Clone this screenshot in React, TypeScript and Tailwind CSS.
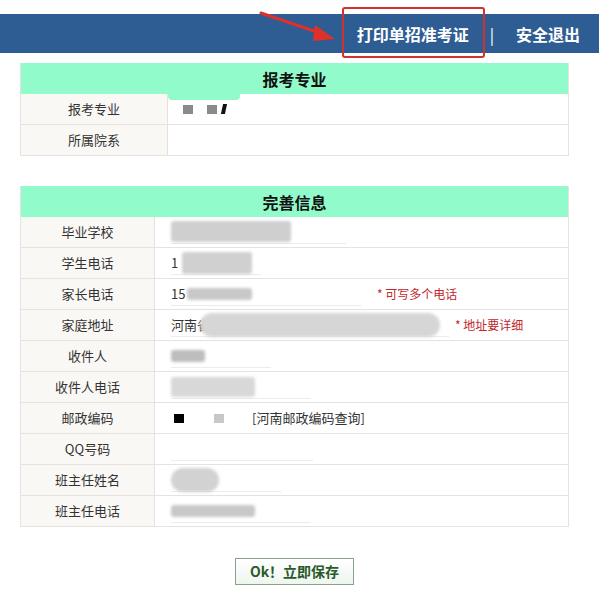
import React from "react";

const font = { fontFamily: '"Noto Sans CJK SC", "Noto Sans", sans-serif' };

function Blur({ w, h, c = "#c9c9c9", round = false }: { w: number; h: number; c?: string; round?: boolean }) {
  return (
    <div
      className={`blur-[1.5px] ${round ? "rounded-full" : "rounded-[3px]"}`}
      style={{ width: w, height: h, background: c }}
    />
  );
}

function Row({ label, children, labelW }: { label: string; children?: React.ReactNode; labelW: number }) {
  return (
    <div className="flex h-[31px] border-b border-[#e6e3de]">
      <div
        className="shrink-0 flex items-center justify-center bg-[#faf8f5] border-r border-[#e6e3de] text-[13px] text-[#333]"
        style={{ width: labelW }}
      >
        {label}
      </div>
      <div className="flex-1 flex items-center pl-[16px] text-[13px] text-[#333] relative">{children}</div>
    </div>
  );
}

function Field({ w = 175, children }: { w?: number; children?: React.ReactNode }) {
  return (
    <div className="h-[24px] flex items-center border-b border-[#ececec]" style={{ width: w }}>
      {children}
    </div>
  );
}

function Note({ text }: { text: string }) {
  return <span className="text-[12px] text-[#c0282d]">* {text}</span>;
}

export default function App() {
  return (
    <div className="w-[599px] h-[595px] bg-white relative overflow-hidden" style={font}>
      <div className="h-[14px]" />
      <div className="h-[39px] bg-[#2e5d93] flex items-center justify-end pr-[19px] text-white font-bold text-[16px]">
        <span>打印单招准考证</span>
        <span className="ml-[21px] mr-[22px] font-normal">|</span>
        <span>安全退出</span>
      </div>

      {/* annotation overlays */}
      <div className="absolute left-[342px] top-[7px] w-[143px] h-[51px] border-2 border-[#d2322d] rounded-[3px]" />
      <svg className="absolute left-[255px] top-[8px]" width="90" height="40" viewBox="0 0 90 40">
        <line x1="6" y1="5" x2="68" y2="26" stroke="#e0302a" strokeWidth="3" strokeLinecap="round" />
        <polygon points="80,31 60,17 58,33" fill="#e0302a" />
      </svg>

      {/* table 1 */}
      <div className="ml-[20px] w-[549px] mt-[10px] border-x border-[#e6e3de]">
        <div className="h-[31px] bg-[#92fbcb] flex items-center justify-center text-[16px] font-bold text-[#111]">报考专业</div>
        <Row label="报考专业" labelW={147}>
          <div className="absolute left-0 top-0 w-[72px] h-[6px] bg-[#92fbcb] rounded-b-[4px]" />
          <div className="flex items-center gap-[14px] ml-[-1px]">
            <div className="w-[10px] h-[9px] bg-[#8a8a8a]" />
            <div className="w-[10px] h-[9px] bg-[#8a8a8a]" />
            <div className="w-[4px] h-[10px] bg-[#111] skew-x-[-12deg] ml-[-9px]" />
          </div>
        </Row>
        <Row label="所属院系" labelW={147} />
      </div>

      {/* table 2 */}
      <div className="ml-[20px] w-[549px] mt-[30px] border-x border-[#e6e3de]">
        <div className="h-[31px] bg-[#92fbcb] flex items-center justify-center text-[16px] font-bold text-[#111]">完善信息</div>
        <Row label="毕业学校" labelW={134}>
          <Field>
            <Blur w={120} h={21} c="#cfcfcf" />
          </Field>
        </Row>
        <Row label="学生电话" labelW={134}>
          <Field w={90}>
            <span className="mr-[4px]">1</span>
            <Blur w={70} h={22} c="#d0d0d0" />
          </Field>
        </Row>
        <Row label="家长电话" labelW={134}>
          <Field w={190}>
            <span className="mr-[2px]">15</span>
            <Blur w={65} h={12} c="#c8c8c8" />
          </Field>
          <div className="ml-[16px]">
            <Note text="可写多个电话" />
          </div>
        </Row>
        <Row label="家庭地址" labelW={134}>
          <Field w={278}>
            <span>河南省</span>
            <div className="ml-[-10px]">
              <Blur w={240} h={24} c="#d6d6d6" round />
            </div>
          </Field>
          <div className="ml-[6px]">
            <Note text="地址要详细" />
          </div>
        </Row>
        <Row label="收件人" labelW={134}>
          <Field w={100}>
            <Blur w={34} h={12} c="#bdbdbd" />
          </Field>
        </Row>
        <Row label="收件人电话" labelW={134}>
          <Field w={140}>
            <Blur w={84} h={20} c="#d8d8d8" />
          </Field>
        </Row>
        <Row label="邮政编码" labelW={134}>
          <div className="flex items-center">
            <div className="w-[10px] h-[9px] bg-black ml-[3px]" />
            <div className="w-[10px] h-[9px] bg-[#c8c8c8] ml-[30px] blur-[0.5px]" />
            <span className="ml-[28px] text-[13px] text-[#333]">[河南邮政编码查询]</span>
          </div>
        </Row>
        <Row label="QQ号码" labelW={134}>
          <Field w={142} />
        </Row>
        <Row label="班主任姓名" labelW={134}>
          <Field w={110}>
            <Blur w={48} h={24} c="#d2d2d2" round />
          </Field>
        </Row>
        <Row label="班主任电话" labelW={134}>
          <Field w={140}>
            <Blur w={84} h={12} c="#c8c8c8" />
          </Field>
        </Row>
      </div>

      <div className="ml-[20px] w-[549px] flex justify-center mt-[31px]">
        <button className="h-[27px] w-[119px] border border-[#8aa08a] bg-gradient-to-b from-white to-[#eef5ee] text-[14px] font-bold text-[#2a5a2a]">
          Ok！立即保存
        </button>
      </div>
    </div>
  );
}
